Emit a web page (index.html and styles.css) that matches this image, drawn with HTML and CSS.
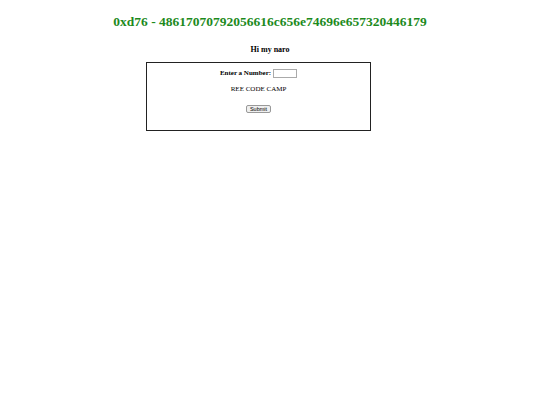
FILE: index.html
```html
<!DOCTYPE html>
<html>
<head>
<meta charset="utf-8">
<link rel="stylesheet" href="styles.css">
</head>
<body>
<h1 class="title">0xd76 - 48617070792056616c656e74696e657320446179</h1>
<h3 class="greet">Hi my naro</h3>
<div class="box">
  <div class="row"><label class="lbl">Enter a Number:</label> <input class="num" type="text"></div>
  <p class="camp">REE CODE CAMP</p>
  <button class="btn">Submit</button>
</div>
</body>
</html>
```
FILE: styles.css
```css
html, body { margin: 0; padding: 0; background: #fff; }
body { font-family: "Liberation Serif", "Times New Roman", serif; color: #000; }
.title { margin: 13px 0 0; font-size: 13.5px; line-height: 17px; color: #1d8a1d; text-align: center; font-weight: bold; }
.greet { margin: 15px 0 0; font-size: 8px; line-height: 10px; text-align: center; font-weight: bold; }
.box { margin: 7px 0 0 146px; width: 223px; height: 67px; border: 1px solid #222; display: flex; flex-direction: column; align-items: center; box-sizing: content-box; }
.row { margin-top: 6px; display: flex; align-items: center; gap: 2px; height: 9px; }
.lbl { font-size: 7px; font-weight: bold; line-height: 9px; }
.num { width: 24px; height: 9px; box-sizing: border-box; border: 1px solid #aaa; padding: 0; margin: 0; font-size: 6px; }
.camp { margin: 7px 0 0; font-size: 7px; line-height: 9px; }
.btn { margin-top: 11px; width: 25px; height: 8px; padding: 0; font-size: 5.5px; line-height: 6px; font-family: "Liberation Sans", Arial, sans-serif; border: 1px solid #999; border-radius: 2px; background: #efefef; color: #000; }
```
